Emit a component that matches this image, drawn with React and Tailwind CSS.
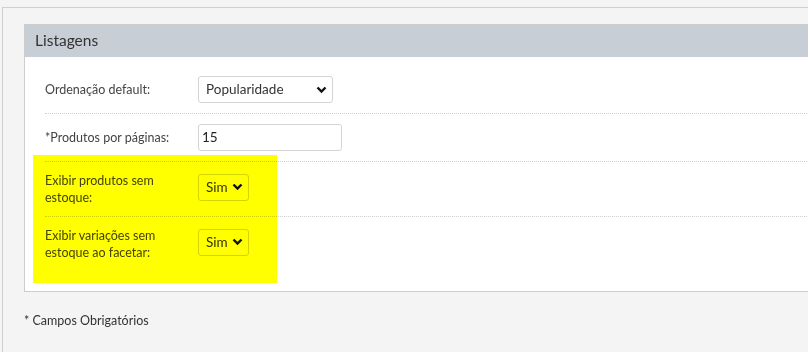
const font = { fontFamily: "Lato, 'Open Sans', sans-serif" };

function Chevron() {
  return (
    <svg width="11" height="8" viewBox="0 0 11 8" className="shrink-0">
      <path d="M1.5 1.5 L5.5 5.5 L9.5 1.5" fill="none" stroke="#111" strokeWidth="2.4" />
    </svg>
  );
}

function FakeSelect({ value, width }) {
  return (
    <div
      className={`flex items-center justify-between h-[27px] border border-[#d4d4d4] rounded-[3px] bg-white pl-[7px] pr-[5px] text-[13.5px] text-[#333] ${width}`}
    >
      <span>{value}</span>
      <Chevron />
    </div>
  );
}

function Row({ label, children, last }) {
  return (
    <div
      className={`flex items-center py-[10px] ${
        last ? "" : "border-b border-dotted border-[#cfcfcf]"
      }`}
    >
      <div className="w-[153px] shrink-0 text-[12.5px] leading-[17px] text-[#444]">
        {label}
      </div>
      {children}
    </div>
  );
}

export default function App() {
  return (
    <div className="relative w-full h-[352px] bg-[#f4f4f4] overflow-hidden" style={font}>
      <div className="mt-[7px] ml-[2px] h-[345px] border-t border-l border-[#cfcfcf] pl-[21px] pt-[16px]">
        {/* Painel Listagens */}
        <div className="mr-[-20px] border border-[#cdcdcd] bg-white">
          <div className="h-[32px] bg-[#c8ced5] px-[10px] flex items-center text-[15.5px] text-[#333]">
            Listagens
          </div>
          <div className="pl-[20px] pt-[9px] pb-[20px]">
            <Row label="Ordenação default:">
              <FakeSelect value="Popularidade" width="w-[135px]" />
            </Row>
            <Row label="*Produtos por páginas:">
              <div className="h-[27px] w-[144px] border border-[#d4d4d4] rounded-[3px] bg-white px-[3px] flex items-center text-[13.5px] text-[#222]">
                15
              </div>
            </Row>
            <Row
              label={
                <>
                  Exibir produtos sem
                  <br />
                  estoque:
                </>
              }
            >
              <div className="-mt-[4px]">
                <FakeSelect value="Sim" width="w-[51px]" />
              </div>
            </Row>
            <Row
              last
              label={
                <>
                  Exibir variações sem
                  <br />
                  estoque ao facetar:
                </>
              }
            >
              <div className="-mt-[4px]">
                <FakeSelect value="Sim" width="w-[51px]" />
              </div>
            </Row>
          </div>
        </div>

        <p className="mt-[20px] text-[12.5px] text-[#333]">* Campos Obrigatórios</p>
      </div>

      {/* marca-texto amarelo */}
      <div className="absolute left-[33px] top-[155px] w-[244px] h-[128px] bg-[#ffff00] mix-blend-multiply pointer-events-none" />
    </div>
  );
}
